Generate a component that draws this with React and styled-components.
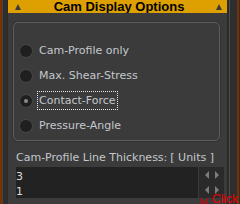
import styled, { createGlobalStyle } from "styled-components";

const Global = createGlobalStyle`
  html, body {
    margin: 0;
    padding: 0;
    background: #2b2b2b;
    overflow: hidden;
  }
`;

const options = [
  { label: "Cam-Profile only" },
  { label: "Max. Shear-Stress" },
  { label: "Contact-Force", checked: true },
  { label: "Pressure-Angle" },
];

export default function App() {
  return (
    <Frame>
      <Global />
      <LeftRail />
      <Main>
        <Header>
          <Tri />
          <Title>Cam Display Options</Title>
          <Tri />
        </Header>
        <Body>
          <GroupBox>
            {options.map((o) => (
              <Row key={o.label}>
                <Radio checked={o.checked} />
                <RadioText focused={o.checked}>{o.label}</RadioText>
              </Row>
            ))}
          </GroupBox>
          <Label>
            <span>Cam-Profile Line Thickness:</span>
            <span>[ Units ]</span>
          </Label>
          <Field>
            <Values>
              <div>3</div>
              <div>1</div>
            </Values>
            <Spinners>
              <SpinRow>
                <Arrow left />
                <Arrow />
              </SpinRow>
              <SpinRow>
                <Arrow left />
                <Arrow />
              </SpinRow>
            </Spinners>
          </Field>
        </Body>
      </Main>
      <RightRail />
      <ClickMark>
        <svg width="8" height="6" viewBox="0 0 8 6">
          <path d="M1 0 V5 H7 V0 M4 2 V5" stroke="#e00000" strokeWidth="1" fill="none" />
        </svg>
        <ClickText>Click</ClickText>
      </ClickMark>
    </Frame>
  );
}

const Frame = styled.div`
  position: relative;
  display: flex;
  width: 240px;
  height: 204px;
  overflow: hidden;
  font-family: "DejaVu Sans", Verdana, sans-serif;
`;

const LeftRail = styled.div`
  width: 2px;
  border-left: 2px solid #7a3000;
  border-right: 1px solid #2a2a2a;
  background: #444;
  flex: none;
  position: relative;
  margin-right: 3px;
  &::after {
    content: "";
    position: absolute;
    top: 0;
    bottom: 0;
    left: 1px;
    width: 4px;
    background: #2d2d2d;
  }
`;

const Main = styled.div`
  width: 219px;
  flex: none;
  display: flex;
  flex-direction: column;
`;

const Header = styled.div`
  height: 13px;
  background: #dea000;
  display: flex;
  align-items: center;
  justify-content: space-between;
  padding: 0 5px 0 7px;
`;

const Tri = styled.div`
  width: 0;
  height: 0;
  border-left: 3px solid transparent;
  border-right: 3px solid transparent;
  border-bottom: 6px solid #3a3a3a;
  margin-top: 1px;
`;

const Title = styled.div`
  font-family: "Liberation Sans", Arial, sans-serif;
  font-weight: bold;
  font-size: 13px;
  color: #000;
  line-height: 13px;
  margin-left: 1px;
`;

const Body = styled.div`
  flex: 1;
  background: #3b3b3b;
  padding: 9px 0 0 5px;
  display: flex;
  flex-direction: column;
`;

const GroupBox = styled.div`
  box-sizing: border-box;
  width: 207px;
  height: 119px;
  border: 1px solid #5e5e5e;
  border-radius: 5px;
  box-shadow: 0 0 0 1px #333;
  padding: 15px 0 0 6px;
`;

const Row = styled.div`
  height: 25px;
  display: flex;
  align-items: center;
  gap: 5px;
`;

const Radio = styled.div`
  width: 12px;
  height: 12px;
  border-radius: 50%;
  background: #1f1f1f;
  box-shadow: 0 0 0 1px #454545;
  position: relative;
  flex: none;
  &::after {
    content: "";
    display: ${(p) => (p.checked ? "block" : "none")};
    position: absolute;
    left: 4px;
    top: 4px;
    width: 4px;
    height: 4px;
    border-radius: 50%;
    background: #8c8c8c;
  }
`;

const RadioText = styled.div`
  font-size: 11px;
  color: #c4c8cc;
  line-height: 17px;
  padding: 0 1px;
  border: 1px dotted ${(p) => (p.focused ? "#e8e8e8" : "transparent")};
`;

const Label = styled.div`
  margin: 9px 0 0 3px;
  font-size: 11px;
  color: #c4c8cc;
  line-height: 15px;
  display: flex;
  gap: 3px;
  white-space: nowrap;
`;

const Field = styled.div`
  margin: 2px 0 0 3px;
  display: flex;
  height: 31px;
`;

const Values = styled.div`
  width: 182px;
  background: #222;
  font-size: 11px;
  color: #dcdcdc;
  line-height: 15px;
  padding-top: 2px;
`;

const Spinners = styled.div`
  width: 25px;
  margin-left: 1px;
  background: #2a2a2a;
  display: flex;
  flex-direction: column;
  justify-content: space-around;
`;

const SpinRow = styled.div`
  display: flex;
  justify-content: center;
  gap: 6px;
`;

const Arrow = styled.div`
  width: 0;
  height: 0;
  border-top: 4px solid transparent;
  border-bottom: 4px solid transparent;
  ${(p) =>
    p.left ? "border-right: 4px solid #7c7c7c;" : "border-left: 4px solid #7c7c7c;"}
`;

const RightRail = styled.div`
  flex: 1;
  background: #2e2e2e;
  border-left: 2px solid #2a2a2a;
  position: relative;
  &::before {
    content: "";
    position: absolute;
    top: 0;
    bottom: 0;
    left: 0;
    width: 1px;
    background: #4e4e4e;
  }
  &::after {
    content: "";
    position: absolute;
    top: 0;
    bottom: 0;
    right: 1px;
    width: 2px;
    background: #7a3000;
  }
`;

const ClickMark = styled.div`
  position: absolute;
  left: 200px;
  top: 194px;
  display: flex;
  align-items: flex-end;
  gap: 4px;
`;

const ClickText = styled.div`
  font-family: "Liberation Sans", Arial, sans-serif;
  color: #f00000;
  font-size: 12px;
  line-height: 10px;
`;
